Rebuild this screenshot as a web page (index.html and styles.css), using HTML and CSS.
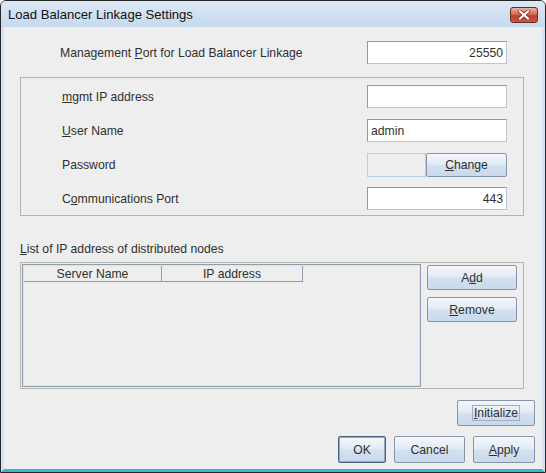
FILE: index.html
```html
<!DOCTYPE html>
<html>
<head>
<meta charset="utf-8">
<link rel="stylesheet" href="styles.css">
</head>
<body>
<div class="window">
  <div class="titlebar">
    <span class="title">Load Balancer Linkage Settings</span>
    <span class="close"><svg width="14" height="10" viewBox="0 0 14 10"><path d="M3 1.5 L11 8.5 M11 1.5 L3 8.5" stroke="#7a2418" stroke-width="3.6" stroke-linecap="square"/><path d="M3 1.5 L11 8.5 M11 1.5 L3 8.5" stroke="#fff" stroke-width="2.2" stroke-linecap="square"/></svg></span>
  </div>
  <div class="content">
    <div class="row top-row">
      <span class="label lead">Management <u>P</u>ort for Load Balancer Linkage</span>
      <div class="field num">25550</div>
    </div>
    <div class="group">
      <div class="row">
        <span class="label"><u>m</u>gmt IP address</span>
        <div class="field"></div>
      </div>
      <div class="row">
        <span class="label"><u>U</u>ser Name</span>
        <div class="field">admin</div>
      </div>
      <div class="row">
        <span class="label">Password</span>
        <div class="pw">
          <div class="pw-field"></div>
          <div class="btn pw-btn"><span><u>C</u>hange</span></div>
        </div>
      </div>
      <div class="row">
        <span class="label">C<u>o</u>mmunications Port</span>
        <div class="field num">443</div>
      </div>
    </div>
    <div class="list-label"><u>L</u>ist of IP address of distributed nodes</div>
    <div class="list-panel">
      <div class="table">
        <div class="thead">
          <div class="th c1">Server Name</div>
          <div class="th c2">IP address</div>
        </div>
      </div>
      <div class="side-btns">
        <div class="btn side"><span>A<u>d</u>d</span></div>
        <div class="btn side"><span><u>R</u>emove</span></div>
      </div>
    </div>
    <div class="init-row">
      <div class="btn init"><span class="focus"><u>I</u>nitialize</span></div>
    </div>
    <div class="bottom-row">
      <div class="btn ok"><span>OK</span></div>
      <div class="btn cancel"><span>Cancel</span></div>
      <div class="btn apply"><span><u>A</u>pply</span></div>
    </div>
  </div>
</div>
</body>
</html>
```
FILE: styles.css
```css
* { box-sizing: border-box; }
body {
  margin: 0;
  font-family: "Liberation Sans", Arial, sans-serif;
  font-size: 12.2px;
  color: #303030;
  background: #fff;
}
u { text-decoration: underline; text-underline-offset: 1px; }
.window {
  width: 546px;
  height: 473px;
  border: 1px solid #262626;
  border-radius: 6px 6px 0 0;
  background: #eeeeee;
  display: flex;
  flex-direction: column;
  overflow: hidden;
}
.titlebar {
  height: 26px;
  flex: none;
  background: linear-gradient(#dce8f5, #c6d9ee);
  display: flex;
  align-items: center;
  padding: 0 7px 0 7px;
  font-size: 13.1px;
  color: #111;
}
.title { flex: 1; padding-top: 1px; }
.close {
  width: 28px;
  height: 16px;
  margin-top: 2px;
  border: 1px solid #6f2a22;
  border-radius: 3px;
  background: linear-gradient(#eab3a6, #d56a55 45%, #c0402a 55%, #c65a3e);
  display: flex;
  align-items: center;
  justify-content: center;
}
.content {
  flex: 1;
  border-left: 3px solid #d5e4f3;
  border-right: 3px solid #d5e4f3;
  border-bottom: 3px solid #3cb4d8;
  padding: 14px 18px 0 16px;
  display: flex;
  flex-direction: column;
}
.row {
  display: flex;
  align-items: center;
  height: 23px;
}
.label { flex: 1; }
.lead { padding-left: 40px; }
.top-row .field { margin-right: 17px; }
.field {
  width: 140px;
  height: 23px;
  background: #fff;
  border: 1px solid;
  border-color: #8a98a8 #b9c6d4 #b9c6d4 #8a98a8;
  padding: 0 3px;
  display: flex;
  align-items: center;
}
.num { justify-content: flex-end; }
.group {
  margin-top: 13px;
  border: 1px solid #b5b5ac;
  padding: 7px 16px 5px 41px;
  display: flex;
  flex-direction: column;
  gap: 11px;
}
.pw { display: flex; width: 140px; height: 24px; }
.pw-field {
  width: 59px;
  border: 1px solid #b8cde3;
  background: #eeeeee;
}
.btn {
  border: 1px solid #8596ab;
  border-radius: 2px;
  background: linear-gradient(#f5f8fc, #e3ebf5 45%, #d2e0ef 55%, #c9d9ec);
  display: flex;
  align-items: center;
  justify-content: center;
  color: #303030;
}
.pw-btn { flex: 1; }
.list-label {
  margin-top: 25px;
  line-height: 15px;
  padding-top: 1px;
}
.list-panel {
  margin-top: 5px;
  height: 127px;
  border: 1px solid #b5b5ac;
  padding: 1px;
  display: flex;
}
.table {
  width: 399px;
  border: 1px solid #8d9eb2;
  box-shadow: inset 0 0 0 1px #e2e2e2;
  padding: 1px;
}
.thead { display: flex; height: 16px; }
.th {
  border-right: 1px solid #8d9db0;
  border-bottom: 1px solid #8d9db0;
  text-align: center;
  line-height: 15px;
  padding-top: 1px;
}
.c1 { width: 138px; }
.c2 { width: 141px; }
.side-btns {
  margin-left: 6px;
  padding-top: 1px;
  width: 90px;
  display: flex;
  flex-direction: column;
  gap: 7px;
}
.side { height: 25px; }
.init-row {
  margin-top: 11px;
  margin-right: -11px;
  display: flex;
  justify-content: flex-end;
}
.init { width: 78px; height: 26px; }
.focus { border: 1px solid #9fb0c4; padding: 0 1px; line-height: 14px; }
.bottom-row {
  margin-top: 10px;
  margin-right: -11px;
  display: flex;
  justify-content: flex-end;
  gap: 8px;
}
.bottom-row .btn { height: 27px; }
.ok {
  width: 48px;
  border-color: #4d6280;
  box-shadow: inset 0 0 0 1px #93a8c0;
}
.cancel { width: 71px; }
.apply { width: 62px; }
```
